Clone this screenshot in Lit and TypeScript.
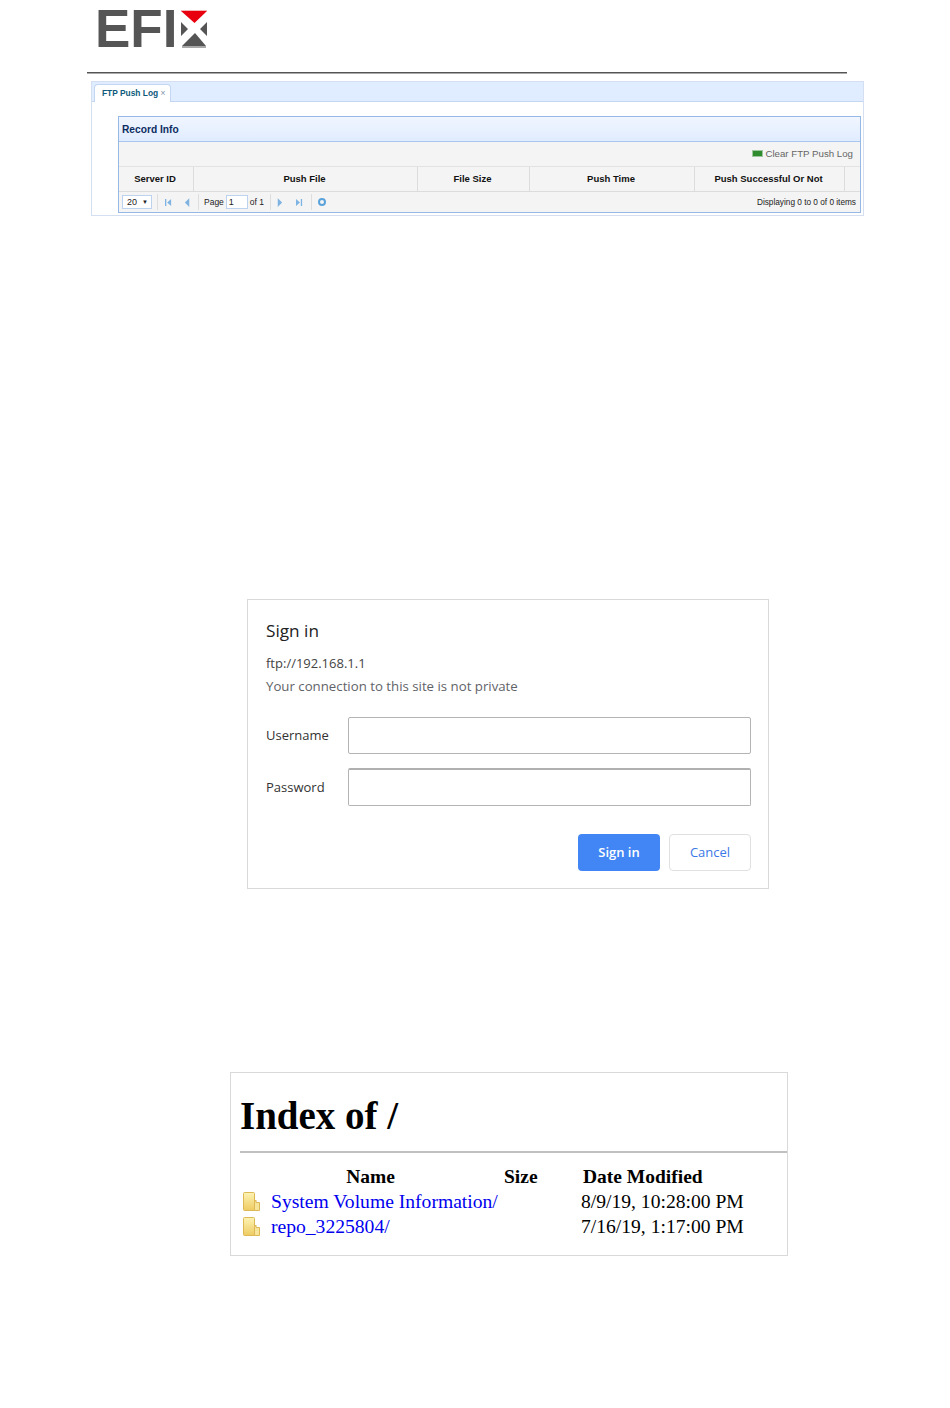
import { LitElement, html, css } from "lit";
import { customElement } from "lit/decorators.js";

const pagerIcon = (d: string) => html`<svg class="pi" viewBox="0 0 8 10"><path d=${d} fill="#7fb3e2"></path></svg>`;
const folder = html`<svg class="folder" viewBox="0 0 17 19">
  <defs><linearGradient id="fg" x1="0" y1="0" x2="0" y2="1"><stop offset="0" stop-color="#fdf3b4"></stop><stop offset="1" stop-color="#eecb62"></stop></linearGradient></defs>
  <path d="M.5 1.5Q.5.5 1.5.5H10.5Q11.5.5 11.5 1.5V18.5H1.5Q.5 18.5 .5 17.5Z" fill="url(#fg)" stroke="#dcb955"></path>
  <path d="M11.5 9.5L13 8V10.5H16.5V18.5H11.5Z" fill="#f6e49a" stroke="#dcb955"></path>
</svg>`;

@customElement("app-root")
export class AppRoot extends LitElement {
  static styles = css`
    :host { display: block; width: 950px; height: 1408px; background: #fff; overflow: hidden; }
    * { box-sizing: border-box; }
    .logo { display: flex; align-items: flex-start; height: 72px; padding: 10px 0 0 98px; }
    .efi { font: 700 53px/38px "Liberation Sans", sans-serif; color: #555; height: 38px; margin-left: -3px; width: 86px; white-space: nowrap; }
    .x { width: 27px; height: 38px; display: block; }
    .rule { height: 2px; margin: 0 103px 0 87px; background: linear-gradient(#555 50%, #aaa 50%); }

    .panel { margin: 7px 86px 0 91px; height: 135px; border: 1px solid #d4e0f2; font-family: "Liberation Sans", sans-serif; color: #222; }
    .tabs { height: 20px; background: #e0ecff; border-bottom: 1px solid #c3d7f4; padding: 2px 0 0 2px; }
    .tab { width: 77px; height: 18px; background: #fff; border: 1px solid #c3d7f4; border-bottom: 0; border-radius: 4px 4px 0 0; font: 700 8.4px/17px "Liberation Sans", sans-serif; color: #0e5a7c; padding-left: 7px; white-space: nowrap; }
    .tab span { color: #7b8fa8; font-weight: 400; }
    .grid { margin: 14px 2px 0 26px; height: 97px; border: 1px solid #95b8e7; }
    .title { height: 25px; border-bottom: 1px solid #a9c6ee; background: linear-gradient(#f1f6ff, #e0ecff); font: 700 10.2px/25px "Liberation Sans", sans-serif; color: #0e2d5f; padding-left: 3px; }
    .tools { height: 25px; background: #f4f4f4; border-bottom: 1px solid #e2e2e2; display: flex; justify-content: flex-end; align-items: center; gap: 2px; padding: 0 7px 1px 0; font-size: 9.7px; color: #666; }
    .add { width: 11px; height: 7px; background: #2e8b2e; border: 1px solid #9fc79f; display: block; }
    .head { height: 25px; background: #f4f4f4; border-bottom: 1px solid #dcdcdc; display: flex; font: 700 9.5px/24px "Liberation Sans", sans-serif; color: #111; }
    .head div { text-align: center; border-right: 1px solid #dcdcdc; flex: none; padding-right: 2px; }
    .pager { height: 20px; background: #f4f4f4; display: flex; align-items: center; font-size: 8.5px; color: #222; padding-left: 3px; white-space: nowrap; }
    .sel { width: 30px; height: 14px; border: 1px solid #bcd2ee; background: #fff; display: flex; justify-content: space-between; padding: 0 3px 0 4px; line-height: 12px; font-size: 9px; }
    .sel i { font-style: normal; font-size: 6px; }
    .sep { width: 1px; height: 16px; background: #dedede; margin: 0 1px; flex: none; }
    .pi { width: 7px; height: 9px; display: block; flex: none; }
    .pin { width: 22px; height: 14px; border: 1px solid #bcd2ee; background: #fff; margin: 0 2px; line-height: 12px; padding-left: 2px; font-size: 9px; }
    .ref { width: 8px; height: 8px; border: 2px solid #5aa3da; border-radius: 50%; display: block; }
    .disp { margin-left: auto; padding-right: 4px; font-size: 8.25px; }

    .signin { margin: 383px 0 0 247px; width: 522px; height: 290px; border: 1px solid #d9d9d9; padding: 20px 17px 0 18px; font-family: "Open Sans", sans-serif; color: #333; display: flex; flex-direction: column; }
    .si-t { font-size: 17.2px; line-height: 22px; color: #222; }
    .si-u { font-size: 13px; line-height: 18px; margin-top: 12px; color: #444; }
    .si-w { font-size: 13.24px; line-height: 18px; margin-top: 5px; color: #5f6368; }
    .row { display: flex; align-items: center; font-size: 13px; color: #333; height: 37px; }
    .row.r1 { margin-top: 22px; }
    .row.r1 label { padding-bottom: 2px; }
    .row.r2 { margin-top: 14px; height: 38px; }
    .row label { width: 82px; flex: none; }
    .inp { flex: 1; height: 100%; border: 1px solid #b4b4b4; border-radius: 2px; background: #fff; }
    .r2 .inp { border-top: 2px solid #b0b0b0; }
    .btns { display: flex; justify-content: flex-end; gap: 9px; margin-top: 28px; }
    .btn { width: 82px; height: 37px; border-radius: 4px; font-size: 13px; font-weight: 600; line-height: 36px; text-align: center; }
    .pri { background: #4285f4; color: #fff; }
    .sec { background: #fff; color: #3b78e7; border: 1px solid #e0e0e0; font-weight: 400; line-height: 34px; }

    .index { margin: 183px 0 0 230px; width: 558px; height: 184px; border: 1px solid #d9d9d9; padding: 0 0 0 9px; font-family: "Liberation Serif", serif; color: #000; }
    h1 { margin: 22px 0 0; font: 700 39px/42px "Liberation Serif", serif; height: 56px; }
    hr { margin: 0; height: 2px; border: 0; background: #c0c0c0; }
    .ir { display: grid; grid-template-columns: 264px 79px 1fr; height: 25px; font-size: 19.6px; line-height: 24px; white-space: nowrap; }
    .ir.h { font-weight: 700; font-size: 19.5px; margin-top: 12px; height: 24.5px; }
    .ir.h div:first-child { text-align: center; padding-right: 3px; }
    .nm { display: flex; align-items: center; gap: 11px; padding-left: 3px; }
    .nm a { color: #0000ee; text-decoration: none; }
    .folder { width: 17px; height: 19px; display: block; flex: none; align-self: flex-start; margin-top: 2px; }
    .d { margin-left: -2px; }
  `;

  render() {
    const cols: [string, number][] = [["Server ID", 75], ["Push File", 224], ["File Size", 112], ["Push Time", 165], ["Push Successful Or Not", 150]];
    return html`
      <div class="logo">
        <div class="efi">EFI</div>
        <svg class="x" viewBox="0 0 27 38">
          <path d="M0 0H26V1H0Z" fill="#f4b4b4"></path>
          <path d="M0 1H26L13.5 13Z" fill="#e8000f"></path>
          <path d="M0 12L7 19 0 26ZM26 12L19 19 26 26Z" fill="#555"></path>
          <path d="M1 36L14 23 25 36Z" fill="#555"></path>
          <path d="M1 36H25V38H1Z" fill="#a8a8a8"></path>
        </svg>
      </div>
      <div class="rule"></div>

      <div class="panel">
        <div class="tabs"><div class="tab">FTP Push Log<span> ×</span></div></div>
        <div class="grid">
          <div class="title">Record Info</div>
          <div class="tools"><i class="add"></i>Clear FTP Push Log</div>
          <div class="head">${cols.map(([t, w]) => html`<div style="width:${w}px">${t}</div>`)}</div>
          <div class="pager">
            <div class="sel">20<i>▼</i></div>
            <span class="sep" style="margin-left:5px"></span>
            <span style="width:6px"></span>${pagerIcon("M0 1H1.5V9H0ZM7 1V9L2.5 5Z")}
            <span style="width:12px"></span>${pagerIcon("M6 0V10L1 5Z")}
            <span style="width:6px"></span><span class="sep"></span>
            <span style="width:4px"></span>Page<span class="pin">1</span>of 1
            <span style="width:5px"></span><span class="sep"></span>
            <span style="width:4px"></span>${pagerIcon("M2 0V10L7 5Z")}
            <span style="width:13px"></span>${pagerIcon("M0 1V9L4.5 5ZM5.5 1H7V9H5.5Z")}
            <span style="width:7px"></span><span class="sep"></span>
            <span style="width:5px"></span><i class="ref"></i>
            <span class="disp">Displaying 0 to 0 of 0 items</span>
          </div>
        </div>
      </div>

      <div class="signin">
        <div class="si-t">Sign in</div>
        <div class="si-u">ftp://192.168.1.1</div>
        <div class="si-w">Your connection to this site is not private</div>
        <div class="row r1"><label>Username</label><div class="inp"></div></div>
        <div class="row r2"><label>Password</label><div class="inp"></div></div>
        <div class="btns"><div class="btn pri">Sign in</div><div class="btn sec">Cancel</div></div>
      </div>

      <div class="index">
        <h1>Index of /</h1>
        <hr />
        <div class="ir h"><div>Name</div><div>Size</div><div>Date Modified</div></div>
        <div class="ir"><div class="nm">${folder}<a>System Volume Information/</a></div><div></div><div class="d">8/9/19, 10:28:00 PM</div></div>
        <div class="ir"><div class="nm">${folder}<a>repo_3225804/</a></div><div></div><div class="d">7/16/19, 1:17:00 PM</div></div>
      </div>
    `;
  }
}
